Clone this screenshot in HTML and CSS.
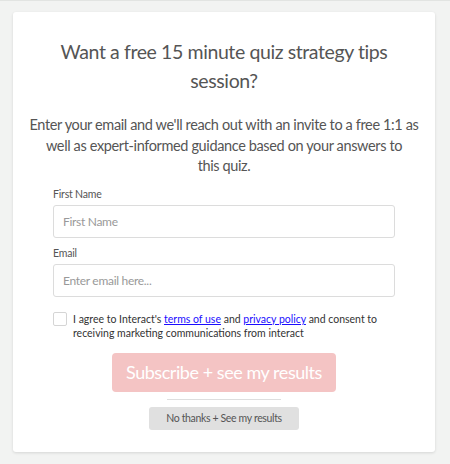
FILE: index.html
```html
<!DOCTYPE html>
<html>
<head>
<meta charset="utf-8">
<link rel="stylesheet" href="styles.css">
</head>
<body>
<div class="card">
  <h1 class="title">Want a free 15 minute quiz strategy tips session?</h1>
  <p class="lead">Enter your email and we'll reach out with an invite to a free 1:1 as well as expert-informed guidance based on your answers to<br>this quiz.</p>
  <form class="form">
    <label class="label">First Name</label>
    <div class="input">First Name</div>
    <label class="label label-email">Email</label>
    <div class="input">Enter email here...</div>
    <div class="consent">
      <span class="checkbox"></span>
      <span class="consent-text">I agree to Interact's <a href="#">terms of use</a> and <a href="#">privacy policy</a> and consent to receiving marketing communications from interact</span>
    </div>
  </form>
  <div class="actions">
    <div class="btn-primary">Subscribe + see my results</div>
    <div class="divider"></div>
    <div class="btn-secondary">No thanks + See my results</div>
  </div>
</div>
</body>
</html>
```

FILE: styles.css
```css
html, body {
  margin: 0;
  padding: 0;
}
body {
  background: #f2f3f2;
  border-top: 1px solid #e2e4e2;
  font-family: "Lato", "Liberation Sans", sans-serif;
  height: 463px;
  overflow: hidden;
}
.card {
  margin: 11px 15px 0 13px;
  width: 422px;
  box-sizing: border-box;
  background: #fff;
  border-radius: 3px;
  box-shadow: 0 1px 3px rgba(0,0,0,0.12);
  padding: 25px 16px 22px;
}
.title {
  margin: 0;
  font-weight: 400;
  font-size: 19.5px;
  letter-spacing: -0.4px;
  line-height: 29px;
  color: #555;
  text-align: center;
}
.lead {
  margin: 20px 0 0;
  font-size: 14.5px;
  letter-spacing: -0.37px;
  line-height: 20.5px;
  color: #555;
  text-align: center;
}
.form {
  margin: 10px 24px 0;
  display: flex;
  flex-direction: column;
}
.label {
  font-size: 10.5px;
  letter-spacing: -0.2px;
  line-height: 14px;
  color: #555;
}
.label-email {
  margin-top: 8px;
}
.input {
  margin-top: 4px;
  height: 33px;
  box-sizing: border-box;
  border: 1px solid #dcdcdc;
  border-radius: 3px;
  padding: 0 9px;
  display: flex;
  align-items: center;
  font-size: 12px;
  letter-spacing: -0.3px;
  color: #999;
}
.consent {
  margin-top: 15px;
  display: flex;
  gap: 6px;
  align-items: flex-start;
}
.checkbox {
  flex: none;
  width: 14px;
  height: 14px;
  box-sizing: border-box;
  border: 1px solid #d5d5d5;
  border-radius: 2px;
}
.consent-text {
  font-size: 10.5px;
  line-height: 14px;
  color: #333;
  padding-top: 0;
  padding-right: 16px;
}
.consent-text a {
  color: #1a0dff;
}
.actions {
  display: flex;
  flex-direction: column;
  align-items: center;
  margin-top: 13px;
}
.btn-primary {
  width: 224px;
  height: 39px;
  background: #f4c4c4;
  border-radius: 4px;
  color: #fff;
  font-size: 18px;
  letter-spacing: -0.45px;
  display: flex;
  align-items: center;
  justify-content: center;
}
.divider {
  margin-top: 7px;
  width: 114px;
  height: 1px;
  background: #dedede;
}
.btn-secondary {
  margin-top: 7px;
  width: 150px;
  height: 23px;
  background: #e0e0e0;
  border-radius: 3px;
  color: #555;
  font-size: 10.5px;
  letter-spacing: -0.35px;
  display: flex;
  align-items: center;
  justify-content: center;
}
```
